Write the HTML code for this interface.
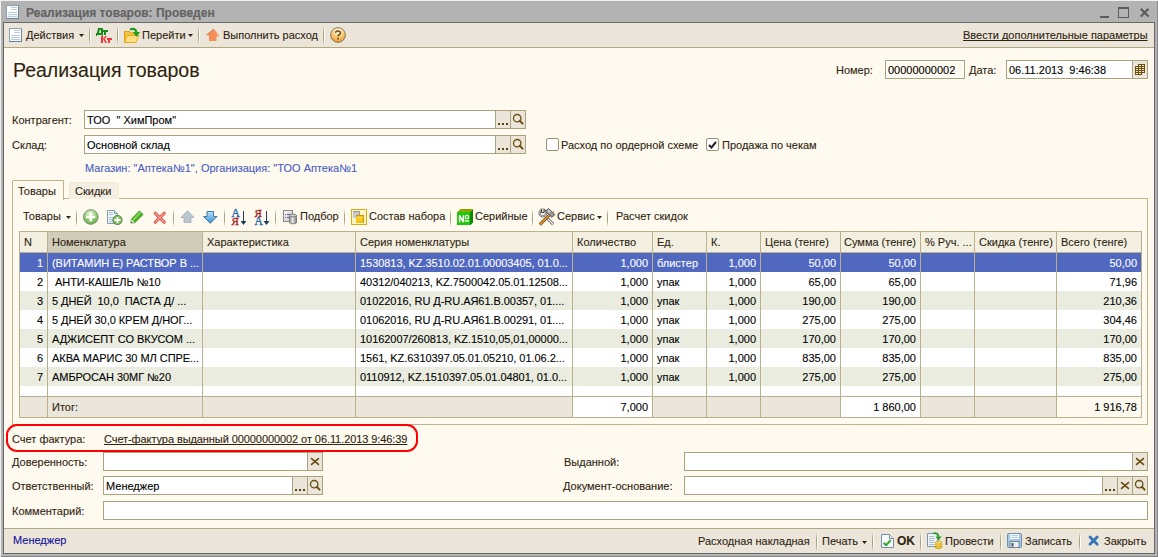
<!DOCTYPE html><html><head><meta charset="utf-8"><style>
html,body{margin:0;padding:0}
body{width:1158px;height:557px;overflow:hidden;position:relative;background:#b3b3b3;font-family:"Liberation Sans", sans-serif}
.a{position:absolute;box-sizing:content-box}
.t{position:absolute;white-space:pre;font-family:"Liberation Sans", sans-serif;-webkit-text-stroke:0.1px currentColor}
svg.a{overflow:visible}
</style></head><body>
<div class="a" style="left:0px;top:0px;width:1158px;height:1px;background:#f0f0f0;"></div>
<div class="a" style="left:0px;top:0px;width:1px;height:557px;background:#f0f0f0;"></div>
<div class="a" style="left:1157px;top:1px;width:1px;height:556px;background:#878787;"></div>
<div class="a" style="left:1px;top:556px;width:1157px;height:1px;background:#878787;"></div>
<div class="a" style="left:3px;top:22px;width:1150px;height:530px;border:1px solid #686868;background:#fefaef;"></div>
<svg class="a" style="left:6px;top:5px" width="13" height="14" viewBox="0 0 13 14"><g shape-rendering="crispEdges"><rect x="0" y="0" width="13" height="14" fill="#8aa2b4"/><rect x="1" y="1" width="11" height="12" fill="#ffffff"/><rect x="1" y="9" width="11" height="4" fill="#eef4f8"/><rect x="12" y="1" width="1" height="13" fill="#6e8698"/><rect x="0" y="13" width="13" height="1" fill="#6e8698"/><rect x="5" y="2" width="6" height="1" fill="#bccbd8"/><rect x="5" y="4" width="6" height="1" fill="#bccbd8"/><rect x="2" y="7" width="9" height="1" fill="#bccbd8"/><rect x="2" y="9" width="9" height="1" fill="#bccbd8"/><rect x="2" y="11" width="9" height="1" fill="#bccbd8"/></g></svg>
<div class="t" style="left:26px;top:6px;font-size:12px;line-height:14px;color:#626262;font-weight:bold;">Реализация товаров: Проведен</div>
<div class="a" style="left:1100px;top:16px;width:9px;height:2px;background:#5c5c5c;"></div>
<div class="a" style="left:1118px;top:7px;width:9px;height:9px;border:1px solid #5c5c5c;"></div>
<div class="a" style="left:1119px;top:8px;width:9px;height:1px;background:#5c5c5c;"></div>
<svg class="a" style="left:1139px;top:7px" width="12" height="12" viewBox="0 0 12 12"><path d="M1.8 1.8L9.5 9.5M9.5 1.8L1.8 9.5" stroke="#5c5c5c" stroke-width="2.2"/></svg>
<div class="a" style="left:4px;top:23px;width:1150px;height:24px;background:#ebe5da;"></div>
<div class="a" style="left:4px;top:47px;width:1150px;height:1px;background:#b0a982;"></div>
<svg class="a" style="left:9px;top:28px" width="13" height="14" viewBox="0 0 13 14"><g shape-rendering="crispEdges"><rect x="0" y="0" width="13" height="14" fill="#8aa2b4"/><rect x="1" y="1" width="11" height="12" fill="#ffffff"/><rect x="1" y="9" width="11" height="4" fill="#eef4f8"/><rect x="12" y="1" width="1" height="13" fill="#6e8698"/><rect x="0" y="13" width="13" height="1" fill="#6e8698"/><rect x="5" y="2" width="6" height="1" fill="#bccbd8"/><rect x="5" y="4" width="6" height="1" fill="#bccbd8"/><rect x="2" y="7" width="9" height="1" fill="#bccbd8"/><rect x="2" y="9" width="9" height="1" fill="#bccbd8"/><rect x="2" y="11" width="9" height="1" fill="#bccbd8"/></g></svg>
<div class="t" style="left:26px;top:29px;font-size:11px;line-height:13px;color:#2e2410;font-weight:normal;">Действия</div>
<svg class="a" style="left:79px;top:34px" width="5" height="3" viewBox="0 0 5 3"><path d="M0 0H5L2.5 3Z" fill="#2e2410"/></svg>
<div class="a" style="left:89px;top:26px;width:1px;height:19px;background:linear-gradient(to bottom,rgba(168,160,118,0),rgba(168,160,118,1) 35%,rgba(168,160,118,1) 65%,rgba(168,160,118,0))"></div>
<div class="a" style="left:90px;top:26px;width:1px;height:19px;background:linear-gradient(to bottom,rgba(255,255,255,0),rgba(255,255,255,1) 35%,rgba(255,255,255,1) 65%,rgba(255,255,255,0))"></div>
<svg class="a" style="left:93px;top:26px" width="22" height="18" viewBox="0 0 22 18"><g shape-rendering="crispEdges" fill="#178a17"><rect x="5" y="2" width="5" height="2"/><rect x="8" y="2" width="2" height="6"/><rect x="3" y="7" width="7" height="2"/><rect x="3" y="9" width="1" height="1"/><rect x="9" y="9" width="1" height="1"/><rect x="10" y="4" width="5" height="2"/><rect x="11" y="4" width="2" height="5"/></g><path d="M5 2H7L6 7.2H4Z" fill="#178a17"/><g shape-rendering="crispEdges" fill="#f0383c"><rect x="8" y="10" width="2" height="7"/><rect x="14" y="12" width="5" height="2"/><rect x="15" y="12" width="2" height="5"/></g><path d="M9.8 13L12.3 10H14L11.2 13.6ZM10.2 13.3L11.6 12.4L14 17H12.3Z" fill="#f0383c"/></svg>
<div class="a" style="left:117px;top:26px;width:1px;height:19px;background:linear-gradient(to bottom,rgba(168,160,118,0),rgba(168,160,118,1) 35%,rgba(168,160,118,1) 65%,rgba(168,160,118,0))"></div>
<div class="a" style="left:118px;top:26px;width:1px;height:19px;background:linear-gradient(to bottom,rgba(255,255,255,0),rgba(255,255,255,1) 35%,rgba(255,255,255,1) 65%,rgba(255,255,255,0))"></div>
<svg class="a" style="left:120px;top:24px" width="22" height="22" viewBox="0 0 22 22"><path d="M4.5 7.5H9.5L11 9H15.5V18.5H4.5Z" fill="#f4c440" stroke="#dba018"/><path d="M4.5 18.5L7 11.5H19L16 18.5Z" fill="#fddf80" stroke="#e6ac24"/><path d="M10 5.5C13 4 16 5 16.5 8.5" fill="none" stroke="#20a020" stroke-width="2.2"/><path d="M12.8 8H20.2L16.5 13Z" fill="#20a020"/></svg>
<div class="t" style="left:142px;top:29px;font-size:11px;line-height:13px;color:#2e2410;font-weight:normal;">Перейти</div>
<svg class="a" style="left:188px;top:34px" width="5" height="3" viewBox="0 0 5 3"><path d="M0 0H5L2.5 3Z" fill="#2e2410"/></svg>
<div class="a" style="left:198px;top:26px;width:1px;height:19px;background:linear-gradient(to bottom,rgba(168,160,118,0),rgba(168,160,118,1) 35%,rgba(168,160,118,1) 65%,rgba(168,160,118,0))"></div>
<div class="a" style="left:199px;top:26px;width:1px;height:19px;background:linear-gradient(to bottom,rgba(255,255,255,0),rgba(255,255,255,1) 35%,rgba(255,255,255,1) 65%,rgba(255,255,255,0))"></div>
<svg class="a" style="left:203px;top:26px" width="20" height="18" viewBox="0 0 20 18"><path d="M11 3L16.5 10.5L13.5 10.3V15H6V9.8L3.5 9Z" fill="#f78f58"/><path d="M3.5 9L11 3" stroke="#c0743a" stroke-width="0.9"/></svg>
<div class="t" style="left:223px;top:29px;font-size:11px;line-height:13px;color:#2e2410;font-weight:normal;">Выполнить расход</div>
<div class="a" style="left:323px;top:26px;width:1px;height:19px;background:linear-gradient(to bottom,rgba(168,160,118,0),rgba(168,160,118,1) 35%,rgba(168,160,118,1) 65%,rgba(168,160,118,0))"></div>
<div class="a" style="left:324px;top:26px;width:1px;height:19px;background:linear-gradient(to bottom,rgba(255,255,255,0),rgba(255,255,255,1) 35%,rgba(255,255,255,1) 65%,rgba(255,255,255,0))"></div>
<svg class="a" style="left:330px;top:27px" width="16" height="16" viewBox="0 0 16 16"><defs><radialGradient id="hg" cx="0.5" cy="0.25" r="0.75"><stop offset="0" stop-color="#fffbe8"/><stop offset="0.55" stop-color="#f6c970"/><stop offset="1" stop-color="#e8962a"/></radialGradient></defs><circle cx="8" cy="8" r="7.4" fill="url(#hg)" stroke="#7f7468" stroke-width="0.9"/><path d="M5.6 5.8C5.6 3.6 10.4 3.4 10.4 5.9C10.4 7.6 8 7.6 8 9.6" fill="none" stroke="#704a22" stroke-width="1.5"/><rect x="7.2" y="10.8" width="1.7" height="1.7" fill="#704a22"/></svg>
<div class="t" style="left:963px;top:29px;font-size:11px;line-height:13px;color:#2e2410;font-weight:normal;text-decoration:underline;text-decoration-skip-ink:none;">Ввести дополнительные параметры</div>
<div class="t" style="left:13px;top:59px;font-size:19.5px;line-height:22px;color:#2e2410">Реализация товаров</div>
<div class="t" style="left:836px;top:64px;font-size:11px;line-height:13px;color:#2e2410;font-weight:normal;">Номер:</div>
<div class="a" style="left:885px;top:60px;width:78px;height:17px;border:1px solid #aaa27e;background:#fefaef;"></div>
<div class="a" style="left:886px;top:61px;width:76px;height:15px;border:1px solid #ffffff;"></div>
<div class="t" style="left:888px;top:64px;font-size:11px;line-height:13px;color:#000;font-weight:normal;">00000000002</div>
<div class="t" style="left:969px;top:64px;font-size:11px;line-height:13px;color:#2e2410;font-weight:normal;">Дата:</div>
<div class="a" style="left:1006px;top:60px;width:140px;height:17px;border:1px solid #aaa27e;background:#fff;"></div>
<div class="t" style="left:1009px;top:64px;font-size:11px;line-height:13px;color:#000;font-weight:normal;">06.11.2013  9:46:38</div>
<div class="a" style="left:1132px;top:60px;width:14px;height:17px;border:1px solid #aaa27e;background:#ebe5da;"></div>
<svg class="a" style="left:1135px;top:64px" width="10" height="11" viewBox="0 0 10 11"><g shape-rendering="crispEdges" fill="#6b4f0c"><rect x="3" y="0" width="7" height="3"/><rect x="0" y="2" width="10" height="7"/><rect x="0" y="8" width="7" height="3"/></g><g shape-rendering="crispEdges" fill="#ede6d2"><rect x="4" y="1" width="2" height="1"/><rect x="7" y="1" width="2" height="1"/><rect x="1" y="3" width="2" height="1"/><rect x="4" y="3" width="2" height="1"/><rect x="7" y="3" width="2" height="1"/><rect x="1" y="5" width="2" height="1"/><rect x="4" y="5" width="2" height="1"/><rect x="7" y="5" width="2" height="1"/><rect x="1" y="7" width="2" height="1"/><rect x="4" y="7" width="2" height="1"/><rect x="7" y="7" width="2" height="1"/><rect x="1" y="9" width="2" height="1"/><rect x="4" y="9" width="2" height="1"/></g></svg>
<div class="t" style="left:12px;top:114px;font-size:11px;line-height:13px;color:#2e2410;font-weight:normal;">Контрагент:</div>
<div class="a" style="left:84px;top:110px;width:440px;height:17px;border:1px solid #aaa27e;background:#fff;"></div>
<div class="t" style="left:87px;top:114px;font-size:11px;line-height:13px;color:#000;font-weight:normal;">ТОО  " ХимПром"</div>
<div class="a" style="left:495px;top:110px;width:14px;height:17px;border:1px solid #aaa27e;background:#ebe5da;"></div>
<div class="a" style="left:498px;top:123px;width:2px;height:2px;background:#5a4510;"></div>
<div class="a" style="left:502px;top:123px;width:2px;height:2px;background:#5a4510;"></div>
<div class="a" style="left:506px;top:123px;width:2px;height:2px;background:#5a4510;"></div>
<div class="a" style="left:510px;top:110px;width:14px;height:17px;border:1px solid #aaa27e;background:#ebe5da;"></div>
<svg class="a" style="left:510px;top:110px" width="16" height="19" viewBox="0 0 16 19"><circle cx="7.2" cy="8.2" r="3.7" fill="none" stroke="#684f12" stroke-width="1.3"/><path d="M9.8 10.8L12.6 13.6" stroke="#684f12" stroke-width="2" stroke-linecap="round"/></svg>
<div class="t" style="left:12px;top:139px;font-size:11px;line-height:13px;color:#2e2410;font-weight:normal;">Склад:</div>
<div class="a" style="left:84px;top:135px;width:440px;height:17px;border:1px solid #aaa27e;background:#fff;"></div>
<div class="t" style="left:87px;top:139px;font-size:11px;line-height:13px;color:#000;font-weight:normal;">Основной склад</div>
<div class="a" style="left:495px;top:135px;width:14px;height:17px;border:1px solid #aaa27e;background:#ebe5da;"></div>
<div class="a" style="left:498px;top:148px;width:2px;height:2px;background:#5a4510;"></div>
<div class="a" style="left:502px;top:148px;width:2px;height:2px;background:#5a4510;"></div>
<div class="a" style="left:506px;top:148px;width:2px;height:2px;background:#5a4510;"></div>
<div class="a" style="left:510px;top:135px;width:14px;height:17px;border:1px solid #aaa27e;background:#ebe5da;"></div>
<svg class="a" style="left:510px;top:135px" width="16" height="19" viewBox="0 0 16 19"><circle cx="7.2" cy="8.2" r="3.7" fill="none" stroke="#684f12" stroke-width="1.3"/><path d="M9.8 10.8L12.6 13.6" stroke="#684f12" stroke-width="2" stroke-linecap="round"/></svg>
<div class="a" style="left:546px;top:138px;width:11px;height:11px;border:1px solid #9c9474;border-radius:2px;background:#fff"></div>
<div class="t" style="left:561px;top:139px;font-size:11px;line-height:13px;color:#2e2410;font-weight:normal;">Расход по ордерной схеме</div>
<div class="a" style="left:706px;top:138px;width:11px;height:11px;border:1px solid #9c9474;border-radius:2px;background:#fff"></div>
<svg class="a" style="left:708px;top:141px" width="9" height="8" viewBox="0 0 9 8"><path d="M1 4L3.5 6.5L8 1" fill="none" stroke="#222" stroke-width="2"/></svg>
<div class="t" style="left:722px;top:139px;font-size:11px;line-height:13px;color:#2e2410;font-weight:normal;">Продажа по чекам</div>
<div class="t" style="left:85px;top:162px;font-size:11px;line-height:13px;color:#4a5cc4;font-weight:normal;">Магазин: "Аптека№1", Организация: "ТОО Аптека№1</div>
<div class="a" style="left:12px;top:198px;width:1134px;height:225px;border:1px solid #bdb48c;"></div>
<div class="a" style="left:12px;top:180px;width:50px;height:19px;border:1px solid #bdb48c;border-bottom:none;border-radius:2px 1px 0 0;background:#fefaef"></div>
<div class="t" style="left:18px;top:185px;font-size:11px;line-height:13px;color:#2e2410;font-weight:normal;">Товары</div>
<div class="a" style="left:69px;top:182px;width:48px;height:16px;border:1px solid #f3eacb;border-bottom:none;border-radius:3px 3px 0 0;background:#f4efe3"></div>
<div class="t" style="left:75px;top:185px;font-size:11px;line-height:13px;color:#2e2410;font-weight:normal;">Скидки</div>
<div class="t" style="left:23px;top:210px;font-size:11px;line-height:13px;color:#2e2410;font-weight:normal;">Товары</div>
<svg class="a" style="left:66px;top:216px" width="5" height="3" viewBox="0 0 5 3"><path d="M0 0H5L2.5 3Z" fill="#2e2410"/></svg>
<div class="a" style="left:76px;top:209px;width:1px;height:18px;background:linear-gradient(to bottom,rgba(168,160,118,0),rgba(168,160,118,1) 35%,rgba(168,160,118,1) 65%,rgba(168,160,118,0))"></div>
<div class="a" style="left:77px;top:209px;width:1px;height:18px;background:linear-gradient(to bottom,rgba(255,255,255,0),rgba(255,255,255,1) 35%,rgba(255,255,255,1) 65%,rgba(255,255,255,0))"></div>
<svg class="a" style="left:82px;top:208px" width="18" height="18" viewBox="0 0 18 18"><defs><radialGradient id="gp" cx="0.45" cy="0.25" r="0.8"><stop offset="0" stop-color="#e4f6d2"/><stop offset="0.6" stop-color="#8ccb68"/><stop offset="1" stop-color="#5aa63a"/></radialGradient></defs><circle cx="8.8" cy="9" r="7.3" fill="url(#gp)" stroke="#7d8c78" stroke-width="1"/><path d="M8.8 4.5V13.5M4.3 9H13.3" stroke="#fff" stroke-width="2.6"/></svg>
<svg class="a" style="left:106px;top:209px" width="18" height="17" viewBox="0 0 18 17"><path d="M1.5 1.5H8.5L11.5 4.5V14.5H1.5Z" fill="#f6f9fc" stroke="#7f98ac"/><path d="M8.5 1.5V4.5H11.5" fill="#dfe8f0" stroke="#7f98ac"/><g shape-rendering="crispEdges" fill="#a8bcd0"><rect x="3" y="3" width="4" height="1"/><rect x="3" y="5" width="4" height="1"/><rect x="3" y="8" width="6" height="1"/><rect x="3" y="10" width="5" height="1"/><rect x="3" y="12" width="5" height="1"/></g><circle cx="11.5" cy="11" r="4.6" fill="#7cc35a" stroke="#5d7e55"/><path d="M11.5 8V14M8.5 11H14.5" stroke="#fff" stroke-width="1.8"/></svg>
<svg class="a" style="left:128px;top:208px" width="18" height="18" viewBox="0 0 18 18"><path d="M3 15L3.2 11.3L11.5 3L15 6.5L6.7 14.8Z" fill="#48b41e" stroke="#2e8a14" stroke-width="0.8"/><path d="M5 12L12.5 4.5" stroke="#9ee070" stroke-width="1.2"/><path d="M3 15L3.2 11.3L6.7 14.8Z" fill="#f4f8ee"/><path d="M3 15L3.1 13.2L4.8 14.9Z" fill="#1e5a10"/></svg>
<svg class="a" style="left:153px;top:211px" width="14" height="14" viewBox="0 0 14 14"><path d="M2.3 2.3L11.2 11.2M11.2 2.3L2.3 11.2" stroke="#dc5a50" stroke-width="3.2" stroke-linecap="round"/><path d="M2.3 2.3L11.2 11.2M11.2 2.3L2.3 11.2" stroke="#f7a496" stroke-width="1.2" stroke-linecap="round"/></svg>
<div class="a" style="left:173px;top:209px;width:1px;height:18px;background:linear-gradient(to bottom,rgba(168,160,118,0),rgba(168,160,118,1) 35%,rgba(168,160,118,1) 65%,rgba(168,160,118,0))"></div>
<div class="a" style="left:174px;top:209px;width:1px;height:18px;background:linear-gradient(to bottom,rgba(255,255,255,0),rgba(255,255,255,1) 35%,rgba(255,255,255,1) 65%,rgba(255,255,255,0))"></div>
<svg class="a" style="left:180px;top:210px" width="15" height="14" viewBox="0 0 15 14"><path d="M7.5 0.8L14 7.5H11V12.5H4V7.5H1Z" fill="#bac6ce" stroke="#a4b0b8" stroke-width="0.9" stroke-linejoin="round"/></svg>
<svg class="a" style="left:203px;top:210px" width="15" height="15" viewBox="0 0 15 15"><defs><linearGradient id="dg" x1="0" y1="0" x2="0" y2="1"><stop offset="0" stop-color="#b4e2fa"/><stop offset="1" stop-color="#3d8fd2"/></linearGradient></defs><path d="M4 1.5H10.5V6.5H14L7.25 13.3L0.5 6.5H4Z" fill="url(#dg)" stroke="#356a98" stroke-width="0.9" stroke-linejoin="round"/></svg>
<div class="a" style="left:224px;top:209px;width:1px;height:18px;background:linear-gradient(to bottom,rgba(168,160,118,0),rgba(168,160,118,1) 35%,rgba(168,160,118,1) 65%,rgba(168,160,118,0))"></div>
<div class="a" style="left:225px;top:209px;width:1px;height:18px;background:linear-gradient(to bottom,rgba(255,255,255,0),rgba(255,255,255,1) 35%,rgba(255,255,255,1) 65%,rgba(255,255,255,0))"></div>
<svg class="a" style="left:231px;top:208px" width="17" height="18" viewBox="0 0 17 18"><text x="0.5" y="9" font-family="Liberation Serif" font-size="11.5" fill="#2a66a8" stroke="#2a66a8" stroke-width="0.35">A</text><text x="0.5" y="17.3" font-family="Liberation Serif" font-size="11" fill="#a81c1c" stroke="#a81c1c" stroke-width="0.35">Я</text><path d="M12.5 3V16" stroke="#1e3a56" stroke-width="1"/><path d="M9.6 13L12.5 17L15.4 13Z" fill="#1e3a56"/></svg>
<svg class="a" style="left:254px;top:208px" width="17" height="18" viewBox="0 0 17 18"><text x="0.5" y="9" font-family="Liberation Serif" font-size="11" fill="#a81c1c" stroke="#a81c1c" stroke-width="0.35">Я</text><text x="0.5" y="17.3" font-family="Liberation Serif" font-size="11.5" fill="#2a66a8" stroke="#2a66a8" stroke-width="0.35">A</text><path d="M12.5 3V16" stroke="#1e3a56" stroke-width="1"/><path d="M9.6 13L12.5 17L15.4 13Z" fill="#1e3a56"/></svg>
<div class="a" style="left:275px;top:209px;width:1px;height:18px;background:linear-gradient(to bottom,rgba(168,160,118,0),rgba(168,160,118,1) 35%,rgba(168,160,118,1) 65%,rgba(168,160,118,0))"></div>
<div class="a" style="left:276px;top:209px;width:1px;height:18px;background:linear-gradient(to bottom,rgba(255,255,255,0),rgba(255,255,255,1) 35%,rgba(255,255,255,1) 65%,rgba(255,255,255,0))"></div>
<svg class="a" style="left:282px;top:209px" width="17" height="17" viewBox="0 0 17 17"><defs><linearGradient id="pg" x1="0" y1="0" x2="1" y2="1"><stop offset="0" stop-color="#fafafa"/><stop offset="1" stop-color="#c4c4c4"/></linearGradient><linearGradient id="cg" x1="0" y1="0" x2="1" y2="0"><stop offset="0" stop-color="#8a8a8a"/><stop offset="0.45" stop-color="#e8e8e8"/><stop offset="1" stop-color="#7a7a7a"/></linearGradient></defs><rect x="1.5" y="1.5" width="9" height="11" fill="url(#pg)" stroke="#888"/><g shape-rendering="crispEdges" fill="#5a5aa8"><rect x="3" y="5" width="1" height="1"/><rect x="5" y="5" width="4" height="1"/><rect x="3" y="8" width="1" height="1"/><rect x="5" y="8" width="4" height="1"/></g><path d="M7.5 6.5V13.5C7.5 15.2 14.5 15.2 14.5 13.5V6.5" fill="url(#cg)" stroke="#777" stroke-width="0.9"/><ellipse cx="11" cy="6.5" rx="3.5" ry="1.4" fill="#d0d0d0" stroke="#777" stroke-width="0.9"/></svg>
<div class="t" style="left:300px;top:210px;font-size:11px;line-height:13px;color:#2e2410;font-weight:normal;">Подбор</div>
<div class="a" style="left:344px;top:209px;width:1px;height:18px;background:linear-gradient(to bottom,rgba(168,160,118,0),rgba(168,160,118,1) 35%,rgba(168,160,118,1) 65%,rgba(168,160,118,0))"></div>
<div class="a" style="left:345px;top:209px;width:1px;height:18px;background:linear-gradient(to bottom,rgba(255,255,255,0),rgba(255,255,255,1) 35%,rgba(255,255,255,1) 65%,rgba(255,255,255,0))"></div>
<div class="a" style="left:351px;top:209px;width:14px;height:14px;border:1px solid #d6ae14;background:#fdf3c4"></div>
<svg class="a" style="left:351px;top:209px" width="16" height="16" viewBox="0 0 16 16"><g shape-rendering="crispEdges"><rect x="2" y="2" width="7" height="7" fill="#9a9a9a"/><rect x="2" y="3" width="6" height="6" fill="#c8c8cc"/><rect x="5" y="6" width="8" height="8" fill="#c89c00"/><rect x="5" y="7" width="7" height="7" fill="#f2c414"/><rect x="6" y="8" width="5" height="1" fill="#fde27a"/><rect x="6" y="10" width="5" height="1" fill="#f8d44a"/></g></svg>
<div class="t" style="left:369px;top:210px;font-size:11px;line-height:13px;color:#2e2410;font-weight:normal;">Состав набора</div>
<div class="a" style="left:450px;top:209px;width:1px;height:18px;background:linear-gradient(to bottom,rgba(168,160,118,0),rgba(168,160,118,1) 35%,rgba(168,160,118,1) 65%,rgba(168,160,118,0))"></div>
<div class="a" style="left:451px;top:209px;width:1px;height:18px;background:linear-gradient(to bottom,rgba(255,255,255,0),rgba(255,255,255,1) 35%,rgba(255,255,255,1) 65%,rgba(255,255,255,0))"></div>
<svg class="a" style="left:457px;top:209px" width="17" height="16" viewBox="0 0 17 16"><g shape-rendering="crispEdges"><rect x="0" y="3" width="13" height="13" fill="#1ec80a"/><path d="M0 3L3 0H16L13 3Z" fill="#8aa800"/><path d="M13 3L16 0V13L13 16Z" fill="#0a8a00"/></g><path d="M2.6 13.2V6.3L6.4 13.2V6.3" fill="none" stroke="#fff" stroke-width="1.5"/><circle cx="10" cy="8" r="1.7" fill="none" stroke="#fff" stroke-width="1.2"/><rect x="8" y="11.3" width="4" height="1.4" fill="#fff"/></svg>
<div class="t" style="left:475px;top:210px;font-size:11px;line-height:13px;color:#2e2410;font-weight:normal;">Серийные</div>
<div class="a" style="left:532px;top:209px;width:1px;height:18px;background:linear-gradient(to bottom,rgba(168,160,118,0),rgba(168,160,118,1) 35%,rgba(168,160,118,1) 65%,rgba(168,160,118,0))"></div>
<div class="a" style="left:533px;top:209px;width:1px;height:18px;background:linear-gradient(to bottom,rgba(255,255,255,0),rgba(255,255,255,1) 35%,rgba(255,255,255,1) 65%,rgba(255,255,255,0))"></div>
<svg class="a" style="left:538px;top:208px" width="18" height="18" viewBox="0 0 18 18"><circle cx="4.8" cy="5" r="3.3" fill="none" stroke="#6a6a6a" stroke-width="2.2"/><circle cx="4.8" cy="5" r="3.3" fill="none" stroke="#d8d8d8" stroke-width="0.8"/><path d="M3.6 1V4.6H6V1" fill="#fefaef" stroke="#222" stroke-width="0.9"/><path d="M9.2 10.2L15.2 16.2" stroke="#5a5a5a" stroke-width="3"/><path d="M9.2 10.2L15.2 16.2" stroke="#f6f6f6" stroke-width="1.3"/><path d="M1.8 16.6L11.2 7.2" stroke="#6a3412" stroke-width="3"/><path d="M1.8 16.6L11.2 7.2" stroke="#eaa232" stroke-width="1.5"/><path d="M7.6 3.2L10.6 0.6L16.8 6.6L14 9.4Z" fill="#9a9a9a" stroke="#303030" stroke-width="0.8"/><path d="M9 3L11 1.5L13 3.5L11 5Z" fill="#d0d0d0"/><path d="M14.6 4.2L15.8 3L16.6 3.8L15.4 5Z" fill="#e0902a"/></svg>
<div class="t" style="left:557px;top:210px;font-size:11px;line-height:13px;color:#2e2410;font-weight:normal;">Сервис</div>
<svg class="a" style="left:597px;top:216px" width="5" height="3" viewBox="0 0 5 3"><path d="M0 0H5L2.5 3Z" fill="#2e2410"/></svg>
<div class="a" style="left:607px;top:209px;width:1px;height:18px;background:linear-gradient(to bottom,rgba(168,160,118,0),rgba(168,160,118,1) 35%,rgba(168,160,118,1) 65%,rgba(168,160,118,0))"></div>
<div class="a" style="left:608px;top:209px;width:1px;height:18px;background:linear-gradient(to bottom,rgba(255,255,255,0),rgba(255,255,255,1) 35%,rgba(255,255,255,1) 65%,rgba(255,255,255,0))"></div>
<div class="t" style="left:616px;top:210px;font-size:11px;line-height:13px;color:#2e2410;font-weight:normal;">Расчет скидок</div>
<div class="a" style="left:19px;top:231px;width:1121px;height:185px;border:1px solid #bab18c;background:#fff;"></div>
<div class="a" style="left:20px;top:232px;width:1121px;height:20px;background:#f3f0e1;"></div>
<div class="a" style="left:48px;top:232px;width:154px;height:20px;background:#d0ccba;"></div>
<div class="a" style="left:20px;top:252px;width:1121px;height:1px;background:#bab18c;"></div>
<div class="a" style="left:20px;top:253px;width:1121px;height:19px;background:#5068c0;"></div>
<div class="a" style="left:20px;top:291px;width:1121px;height:19px;background:#e9ecdf;"></div>
<div class="a" style="left:20px;top:329px;width:1121px;height:19px;background:#e9ecdf;"></div>
<div class="a" style="left:20px;top:367px;width:1121px;height:19px;background:#e9ecdf;"></div>
<div class="a" style="left:20px;top:396px;width:1121px;height:1px;background:#bab18c;"></div>
<div class="a" style="left:20px;top:397px;width:1121px;height:20px;background:#ebe6dc;"></div>
<div class="a" style="left:573px;top:397px;width:79px;height:20px;background:#fff;"></div>
<div class="a" style="left:841px;top:397px;width:79px;height:20px;background:#fff;"></div>
<div class="a" style="left:1057px;top:397px;width:84px;height:20px;background:#fefaef;"></div>
<div class="a" style="left:47px;top:232px;width:1px;height:185px;background:#bab18c;"></div>
<div class="a" style="left:202px;top:232px;width:1px;height:185px;background:#bab18c;"></div>
<div class="a" style="left:355px;top:232px;width:1px;height:185px;background:#bab18c;"></div>
<div class="a" style="left:572px;top:232px;width:1px;height:185px;background:#bab18c;"></div>
<div class="a" style="left:652px;top:232px;width:1px;height:185px;background:#bab18c;"></div>
<div class="a" style="left:706px;top:232px;width:1px;height:185px;background:#bab18c;"></div>
<div class="a" style="left:760px;top:232px;width:1px;height:185px;background:#bab18c;"></div>
<div class="a" style="left:840px;top:232px;width:1px;height:185px;background:#bab18c;"></div>
<div class="a" style="left:920px;top:232px;width:1px;height:185px;background:#bab18c;"></div>
<div class="a" style="left:974px;top:232px;width:1px;height:185px;background:#bab18c;"></div>
<div class="a" style="left:1056px;top:232px;width:1px;height:185px;background:#bab18c;"></div>
<div class="t" style="left:24px;top:236px;font-size:11px;line-height:13px;color:#2e2410;font-weight:normal;">N</div>
<div class="t" style="left:52px;top:236px;font-size:11px;line-height:13px;color:#2e2410;font-weight:normal;">Номенклатура</div>
<div class="t" style="left:207px;top:236px;font-size:11px;line-height:13px;color:#2e2410;font-weight:normal;">Характеристика</div>
<div class="t" style="left:360px;top:236px;font-size:11px;line-height:13px;color:#2e2410;font-weight:normal;">Серия номенклатуры</div>
<div class="t" style="left:577px;top:236px;font-size:11px;line-height:13px;color:#2e2410;font-weight:normal;">Количество</div>
<div class="t" style="left:657px;top:236px;font-size:11px;line-height:13px;color:#2e2410;font-weight:normal;">Ед.</div>
<div class="t" style="left:711px;top:236px;font-size:11px;line-height:13px;color:#2e2410;font-weight:normal;">К.</div>
<div class="t" style="left:765px;top:236px;font-size:11px;line-height:13px;color:#2e2410;font-weight:normal;">Цена (тенге)</div>
<div class="t" style="left:844px;top:236px;font-size:11px;line-height:13px;color:#2e2410;font-weight:normal;">Сумма (тенге)</div>
<div class="t" style="left:925px;top:236px;font-size:11px;line-height:13px;color:#2e2410;font-weight:normal;">% Руч. ...</div>
<div class="t" style="left:979px;top:236px;font-size:11px;line-height:13px;color:#2e2410;font-weight:normal;">Скидка (тенге)</div>
<div class="t" style="left:1061px;top:236px;font-size:11px;line-height:13px;color:#2e2410;font-weight:normal;">Всего (тенге)</div>
<div class="t" style="right:1115px;top:257px;font-size:11px;line-height:13px;color:#fff;text-align:right;">1</div>
<div class="t" style="left:52px;top:257px;font-size:11px;line-height:13px;color:#fff;font-weight:normal;letter-spacing:-0.05px;">(ВИТАМИН Е) РАСТВОР В ...</div>
<div class="t" style="left:360px;top:257px;font-size:11px;line-height:13px;color:#fff;font-weight:normal;letter-spacing:-0.05px;">1530813, KZ.3510.02.01.00003405, 01.0...</div>
<div class="t" style="right:510px;top:257px;font-size:11px;line-height:13px;color:#fff;text-align:right;">1,000</div>
<div class="t" style="left:657px;top:257px;font-size:11px;line-height:13px;color:#fff;font-weight:normal;">блистер</div>
<div class="t" style="right:402px;top:257px;font-size:11px;line-height:13px;color:#fff;text-align:right;">1,000</div>
<div class="t" style="right:322px;top:257px;font-size:11px;line-height:13px;color:#fff;text-align:right;">50,00</div>
<div class="t" style="right:242px;top:257px;font-size:11px;line-height:13px;color:#fff;text-align:right;">50,00</div>
<div class="t" style="right:21px;top:257px;font-size:11px;line-height:13px;color:#fff;text-align:right;">50,00</div>
<div class="t" style="right:1115px;top:276px;font-size:11px;line-height:13px;color:#000;text-align:right;">2</div>
<div class="t" style="left:52px;top:276px;font-size:11px;line-height:13px;color:#000;font-weight:normal;letter-spacing:-0.05px;"> АНТИ-КАШЕЛЬ №10</div>
<div class="t" style="left:360px;top:276px;font-size:11px;line-height:13px;color:#000;font-weight:normal;letter-spacing:-0.05px;">40312/040213, KZ.7500042.05.01.12508...</div>
<div class="t" style="right:510px;top:276px;font-size:11px;line-height:13px;color:#000;text-align:right;">1,000</div>
<div class="t" style="left:657px;top:276px;font-size:11px;line-height:13px;color:#000;font-weight:normal;">упак</div>
<div class="t" style="right:402px;top:276px;font-size:11px;line-height:13px;color:#000;text-align:right;">1,000</div>
<div class="t" style="right:322px;top:276px;font-size:11px;line-height:13px;color:#000;text-align:right;">65,00</div>
<div class="t" style="right:242px;top:276px;font-size:11px;line-height:13px;color:#000;text-align:right;">65,00</div>
<div class="t" style="right:21px;top:276px;font-size:11px;line-height:13px;color:#000;text-align:right;">71,96</div>
<div class="t" style="right:1115px;top:295px;font-size:11px;line-height:13px;color:#000;text-align:right;">3</div>
<div class="t" style="left:52px;top:295px;font-size:11px;line-height:13px;color:#000;font-weight:normal;letter-spacing:-0.05px;">5 ДНЕЙ  10,0  ПАСТА Д/ ...</div>
<div class="t" style="left:360px;top:295px;font-size:11px;line-height:13px;color:#000;font-weight:normal;letter-spacing:-0.05px;">01022016, RU Д-RU.АЯ61.В.00357, 01....</div>
<div class="t" style="right:510px;top:295px;font-size:11px;line-height:13px;color:#000;text-align:right;">1,000</div>
<div class="t" style="left:657px;top:295px;font-size:11px;line-height:13px;color:#000;font-weight:normal;">упак</div>
<div class="t" style="right:402px;top:295px;font-size:11px;line-height:13px;color:#000;text-align:right;">1,000</div>
<div class="t" style="right:322px;top:295px;font-size:11px;line-height:13px;color:#000;text-align:right;">190,00</div>
<div class="t" style="right:242px;top:295px;font-size:11px;line-height:13px;color:#000;text-align:right;">190,00</div>
<div class="t" style="right:21px;top:295px;font-size:11px;line-height:13px;color:#000;text-align:right;">210,36</div>
<div class="t" style="right:1115px;top:314px;font-size:11px;line-height:13px;color:#000;text-align:right;">4</div>
<div class="t" style="left:52px;top:314px;font-size:11px;line-height:13px;color:#000;font-weight:normal;letter-spacing:-0.05px;">5 ДНЕЙ 30,0 КРЕМ Д/НОГ...</div>
<div class="t" style="left:360px;top:314px;font-size:11px;line-height:13px;color:#000;font-weight:normal;letter-spacing:-0.05px;">01062016, RU Д-RU.АЯ61.В.00291, 01....</div>
<div class="t" style="right:510px;top:314px;font-size:11px;line-height:13px;color:#000;text-align:right;">1,000</div>
<div class="t" style="left:657px;top:314px;font-size:11px;line-height:13px;color:#000;font-weight:normal;">упак</div>
<div class="t" style="right:402px;top:314px;font-size:11px;line-height:13px;color:#000;text-align:right;">1,000</div>
<div class="t" style="right:322px;top:314px;font-size:11px;line-height:13px;color:#000;text-align:right;">275,00</div>
<div class="t" style="right:242px;top:314px;font-size:11px;line-height:13px;color:#000;text-align:right;">275,00</div>
<div class="t" style="right:21px;top:314px;font-size:11px;line-height:13px;color:#000;text-align:right;">304,46</div>
<div class="t" style="right:1115px;top:333px;font-size:11px;line-height:13px;color:#000;text-align:right;">5</div>
<div class="t" style="left:52px;top:333px;font-size:11px;line-height:13px;color:#000;font-weight:normal;letter-spacing:-0.05px;">АДЖИСЕПТ СО ВКУСОМ ...</div>
<div class="t" style="left:360px;top:333px;font-size:11px;line-height:13px;color:#000;font-weight:normal;letter-spacing:-0.05px;">10162007/260813, KZ.1510,05,01,00000...</div>
<div class="t" style="right:510px;top:333px;font-size:11px;line-height:13px;color:#000;text-align:right;">1,000</div>
<div class="t" style="left:657px;top:333px;font-size:11px;line-height:13px;color:#000;font-weight:normal;">упак</div>
<div class="t" style="right:402px;top:333px;font-size:11px;line-height:13px;color:#000;text-align:right;">1,000</div>
<div class="t" style="right:322px;top:333px;font-size:11px;line-height:13px;color:#000;text-align:right;">170,00</div>
<div class="t" style="right:242px;top:333px;font-size:11px;line-height:13px;color:#000;text-align:right;">170,00</div>
<div class="t" style="right:21px;top:333px;font-size:11px;line-height:13px;color:#000;text-align:right;">170,00</div>
<div class="t" style="right:1115px;top:352px;font-size:11px;line-height:13px;color:#000;text-align:right;">6</div>
<div class="t" style="left:52px;top:352px;font-size:11px;line-height:13px;color:#000;font-weight:normal;letter-spacing:-0.05px;">АКВА МАРИС 30 МЛ СПРЕ...</div>
<div class="t" style="left:360px;top:352px;font-size:11px;line-height:13px;color:#000;font-weight:normal;letter-spacing:-0.05px;">1561, KZ.6310397.05.01.05210, 01.06.2...</div>
<div class="t" style="right:510px;top:352px;font-size:11px;line-height:13px;color:#000;text-align:right;">1,000</div>
<div class="t" style="left:657px;top:352px;font-size:11px;line-height:13px;color:#000;font-weight:normal;">упак</div>
<div class="t" style="right:402px;top:352px;font-size:11px;line-height:13px;color:#000;text-align:right;">1,000</div>
<div class="t" style="right:322px;top:352px;font-size:11px;line-height:13px;color:#000;text-align:right;">835,00</div>
<div class="t" style="right:242px;top:352px;font-size:11px;line-height:13px;color:#000;text-align:right;">835,00</div>
<div class="t" style="right:21px;top:352px;font-size:11px;line-height:13px;color:#000;text-align:right;">835,00</div>
<div class="t" style="right:1115px;top:371px;font-size:11px;line-height:13px;color:#000;text-align:right;">7</div>
<div class="t" style="left:52px;top:371px;font-size:11px;line-height:13px;color:#000;font-weight:normal;letter-spacing:-0.05px;">АМБРОСАН 30МГ №20</div>
<div class="t" style="left:360px;top:371px;font-size:11px;line-height:13px;color:#000;font-weight:normal;letter-spacing:-0.05px;">0110912, KZ.1510397.05.01.04801, 01.0...</div>
<div class="t" style="right:510px;top:371px;font-size:11px;line-height:13px;color:#000;text-align:right;">1,000</div>
<div class="t" style="left:657px;top:371px;font-size:11px;line-height:13px;color:#000;font-weight:normal;">упак</div>
<div class="t" style="right:402px;top:371px;font-size:11px;line-height:13px;color:#000;text-align:right;">1,000</div>
<div class="t" style="right:322px;top:371px;font-size:11px;line-height:13px;color:#000;text-align:right;">275,00</div>
<div class="t" style="right:242px;top:371px;font-size:11px;line-height:13px;color:#000;text-align:right;">275,00</div>
<div class="t" style="right:21px;top:371px;font-size:11px;line-height:13px;color:#000;text-align:right;">275,00</div>
<div class="t" style="left:52px;top:401px;font-size:11px;line-height:13px;color:#2e2410;font-weight:normal;">Итог:</div>
<div class="t" style="right:510px;top:401px;font-size:11px;line-height:13px;color:#000;text-align:right;">7,000</div>
<div class="t" style="right:242px;top:401px;font-size:11px;line-height:13px;color:#000;text-align:right;">1 860,00</div>
<div class="t" style="right:21px;top:401px;font-size:11px;line-height:13px;color:#000;text-align:right;">1 916,78</div>
<div class="t" style="left:12px;top:433px;font-size:11px;line-height:13px;color:#2e2410;font-weight:normal;">Счет фактура:</div>
<div class="t" style="left:104px;top:433px;font-size:11px;line-height:13px;color:#2e2410;font-weight:normal;text-decoration:underline;text-decoration-skip-ink:none;letter-spacing:-0.08px;">Счет-фактура выданный 00000000002 от 06.11.2013 9:46:39</div>
<div class="a" style="left:6px;top:424px;width:408px;height:24px;border:2px solid #ff0000;border-radius:11px"></div>
<div class="t" style="left:12px;top:456px;font-size:11px;line-height:13px;color:#2e2410;font-weight:normal;">Доверенность:</div>
<div class="a" style="left:103px;top:452px;width:218px;height:17px;border:1px solid #aaa27e;background:#fff;"></div>
<div class="a" style="left:307px;top:452px;width:14px;height:17px;border:1px solid #aaa27e;background:#ebe5da;"></div>
<svg class="a" style="left:307px;top:452px" width="16" height="19" viewBox="0 0 16 19"><path d="M4.6 6.6L11.4 12.4M11.4 6.6L4.6 12.4" stroke="#684f12" stroke-width="1.7" stroke-linecap="round"/></svg>
<div class="t" style="left:12px;top:480px;font-size:11px;line-height:13px;color:#2e2410;font-weight:normal;">Ответственный:</div>
<div class="a" style="left:103px;top:476px;width:218px;height:17px;border:1px solid #aaa27e;background:#fff;"></div>
<div class="t" style="left:106px;top:480px;font-size:11px;line-height:13px;color:#000;font-weight:normal;">Менеджер</div>
<div class="a" style="left:292px;top:476px;width:14px;height:17px;border:1px solid #aaa27e;background:#ebe5da;"></div>
<div class="a" style="left:295px;top:489px;width:2px;height:2px;background:#5a4510;"></div>
<div class="a" style="left:299px;top:489px;width:2px;height:2px;background:#5a4510;"></div>
<div class="a" style="left:303px;top:489px;width:2px;height:2px;background:#5a4510;"></div>
<div class="a" style="left:307px;top:476px;width:14px;height:17px;border:1px solid #aaa27e;background:#ebe5da;"></div>
<svg class="a" style="left:307px;top:476px" width="16" height="19" viewBox="0 0 16 19"><circle cx="7.2" cy="8.2" r="3.7" fill="none" stroke="#684f12" stroke-width="1.3"/><path d="M9.8 10.8L12.6 13.6" stroke="#684f12" stroke-width="2" stroke-linecap="round"/></svg>
<div class="t" style="left:12px;top:505px;font-size:11px;line-height:13px;color:#2e2410;font-weight:normal;">Комментарий:</div>
<div class="a" style="left:103px;top:501px;width:1043px;height:17px;border:1px solid #aaa27e;background:#fff;"></div>
<div class="t" style="left:564px;top:456px;font-size:11px;line-height:13px;color:#2e2410;font-weight:normal;">Выданной:</div>
<div class="a" style="left:684px;top:452px;width:462px;height:17px;border:1px solid #aaa27e;background:#fff;"></div>
<div class="a" style="left:1132px;top:452px;width:14px;height:17px;border:1px solid #aaa27e;background:#ebe5da;"></div>
<svg class="a" style="left:1132px;top:452px" width="16" height="19" viewBox="0 0 16 19"><path d="M4.6 6.6L11.4 12.4M11.4 6.6L4.6 12.4" stroke="#684f12" stroke-width="1.7" stroke-linecap="round"/></svg>
<div class="t" style="left:563px;top:480px;font-size:11px;line-height:13px;color:#2e2410;font-weight:normal;">Документ-основание:</div>
<div class="a" style="left:684px;top:476px;width:462px;height:17px;border:1px solid #aaa27e;background:#fff;"></div>
<div class="a" style="left:1102px;top:476px;width:14px;height:17px;border:1px solid #aaa27e;background:#ebe5da;"></div>
<div class="a" style="left:1105px;top:489px;width:2px;height:2px;background:#5a4510;"></div>
<div class="a" style="left:1109px;top:489px;width:2px;height:2px;background:#5a4510;"></div>
<div class="a" style="left:1113px;top:489px;width:2px;height:2px;background:#5a4510;"></div>
<div class="a" style="left:1117px;top:476px;width:14px;height:17px;border:1px solid #aaa27e;background:#ebe5da;"></div>
<svg class="a" style="left:1117px;top:476px" width="16" height="19" viewBox="0 0 16 19"><path d="M4.6 6.6L11.4 12.4M11.4 6.6L4.6 12.4" stroke="#684f12" stroke-width="1.7" stroke-linecap="round"/></svg>
<div class="a" style="left:1132px;top:476px;width:14px;height:17px;border:1px solid #aaa27e;background:#ebe5da;"></div>
<svg class="a" style="left:1132px;top:476px" width="16" height="19" viewBox="0 0 16 19"><circle cx="7.2" cy="8.2" r="3.7" fill="none" stroke="#684f12" stroke-width="1.3"/><path d="M9.8 10.8L12.6 13.6" stroke="#684f12" stroke-width="2" stroke-linecap="round"/></svg>
<div class="a" style="left:4px;top:528px;width:1150px;height:1px;background:#b0a982;"></div>
<div class="a" style="left:4px;top:529px;width:1150px;height:24px;background:#ebe5da;"></div>
<div class="t" style="left:13px;top:534px;font-size:11px;line-height:13px;color:#10109a;font-weight:normal;">Менеджер</div>
<div class="t" style="left:698px;top:535px;font-size:11px;line-height:13px;color:#2e2410;font-weight:normal;">Расходная накладная</div>
<div class="a" style="left:816px;top:532px;width:1px;height:20px;background:linear-gradient(to bottom,rgba(168,160,118,0),rgba(168,160,118,1) 35%,rgba(168,160,118,1) 65%,rgba(168,160,118,0))"></div>
<div class="a" style="left:817px;top:532px;width:1px;height:20px;background:linear-gradient(to bottom,rgba(255,255,255,0),rgba(255,255,255,1) 35%,rgba(255,255,255,1) 65%,rgba(255,255,255,0))"></div>
<div class="t" style="left:822px;top:535px;font-size:11px;line-height:13px;color:#2e2410;font-weight:normal;">Печать</div>
<svg class="a" style="left:862px;top:541px" width="5" height="3" viewBox="0 0 5 3"><path d="M0 0H5L2.5 3Z" fill="#2e2410"/></svg>
<div class="a" style="left:872px;top:532px;width:1px;height:20px;background:linear-gradient(to bottom,rgba(168,160,118,0),rgba(168,160,118,1) 35%,rgba(168,160,118,1) 65%,rgba(168,160,118,0))"></div>
<div class="a" style="left:873px;top:532px;width:1px;height:20px;background:linear-gradient(to bottom,rgba(255,255,255,0),rgba(255,255,255,1) 35%,rgba(255,255,255,1) 65%,rgba(255,255,255,0))"></div>
<svg class="a" style="left:880px;top:533px" width="15" height="16" viewBox="0 0 15 16"><path d="M1.5 1.5H9.5L13.5 5.5V14.5H1.5Z" fill="#f6f9fc" stroke="#7890a6"/><path d="M9.5 1.5V5.5H13.5" fill="#dde6ee" stroke="#7890a6"/><path d="M3.6 9.8L6 12.2L10.8 7" fill="none" stroke="#3aa82e" stroke-width="2" stroke-linejoin="round"/></svg>
<div class="t" style="left:897px;top:534px;font-size:12px;line-height:14px;color:#2e2410;font-weight:bold;">OK</div>
<div class="a" style="left:920px;top:532px;width:1px;height:20px;background:linear-gradient(to bottom,rgba(168,160,118,0),rgba(168,160,118,1) 35%,rgba(168,160,118,1) 65%,rgba(168,160,118,0))"></div>
<div class="a" style="left:921px;top:532px;width:1px;height:20px;background:linear-gradient(to bottom,rgba(255,255,255,0),rgba(255,255,255,1) 35%,rgba(255,255,255,1) 65%,rgba(255,255,255,0))"></div>
<svg class="a" style="left:926px;top:532px" width="18" height="18" viewBox="0 0 18 18"><path d="M1.5 1.5H9L11.5 4V14.5H1.5Z" fill="#f2f6fb" stroke="#7c94aa"/><g shape-rendering="crispEdges" fill="#a8bcd0"><rect x="3" y="4" width="5" height="1"/><rect x="3" y="6" width="6" height="1"/><rect x="3" y="8" width="5" height="1"/><rect x="3" y="10" width="5" height="1"/><rect x="3" y="12" width="5" height="1"/></g><path d="M7 1.5C10 0.5 12.5 1.5 12.5 4.5" fill="none" stroke="#2c9a2c" stroke-width="1.8"/><path d="M9.3 4.5H15.7L12.5 8.5Z" fill="#2c9a2c"/><g stroke="#c89a18" stroke-width="0.8"><ellipse cx="12.5" cy="15" rx="3.6" ry="1.5" fill="#f4cc3c"/><ellipse cx="12.5" cy="12.8" rx="3.6" ry="1.5" fill="#f8d850"/><ellipse cx="12.5" cy="10.6" rx="3.6" ry="1.5" fill="#fce27a"/></g></svg>
<div class="t" style="left:945px;top:535px;font-size:11px;line-height:13px;color:#2e2410;font-weight:normal;">Провести</div>
<div class="a" style="left:1000px;top:532px;width:1px;height:20px;background:linear-gradient(to bottom,rgba(168,160,118,0),rgba(168,160,118,1) 35%,rgba(168,160,118,1) 65%,rgba(168,160,118,0))"></div>
<div class="a" style="left:1001px;top:532px;width:1px;height:20px;background:linear-gradient(to bottom,rgba(255,255,255,0),rgba(255,255,255,1) 35%,rgba(255,255,255,1) 65%,rgba(255,255,255,0))"></div>
<svg class="a" style="left:1006px;top:532px" width="17" height="17" viewBox="0 0 17 17"><rect x="1.5" y="1.5" width="14" height="14" rx="1" fill="#a9c8e4" stroke="#7092b0"/><rect x="4" y="2" width="9" height="5" fill="#f4f8fb"/><g shape-rendering="crispEdges" fill="#b4d8e8"><rect x="5" y="3" width="7" height="1"/><rect x="5" y="5" width="7" height="1"/></g><rect x="4" y="9.5" width="9" height="6" fill="#eef0f2" stroke="#5a7088" stroke-width="0.8"/><rect x="5.5" y="11" width="2" height="3.5" fill="#3c5064"/></svg>
<div class="t" style="left:1025px;top:535px;font-size:11px;line-height:13px;color:#2e2410;font-weight:normal;">Записать</div>
<div class="a" style="left:1079px;top:532px;width:1px;height:20px;background:linear-gradient(to bottom,rgba(168,160,118,0),rgba(168,160,118,1) 35%,rgba(168,160,118,1) 65%,rgba(168,160,118,0))"></div>
<div class="a" style="left:1080px;top:532px;width:1px;height:20px;background:linear-gradient(to bottom,rgba(255,255,255,0),rgba(255,255,255,1) 35%,rgba(255,255,255,1) 65%,rgba(255,255,255,0))"></div>
<svg class="a" style="left:1088px;top:535px" width="11" height="11" viewBox="0 0 11 11"><path d="M2 2L9.2 9.2M9.2 2L2 9.2" stroke="#3874b8" stroke-width="2.8" stroke-linecap="round"/></svg>
<div class="t" style="left:1104px;top:535px;font-size:11px;line-height:13px;color:#2e2410;font-weight:normal;">Закрыть</div>
</body></html>
